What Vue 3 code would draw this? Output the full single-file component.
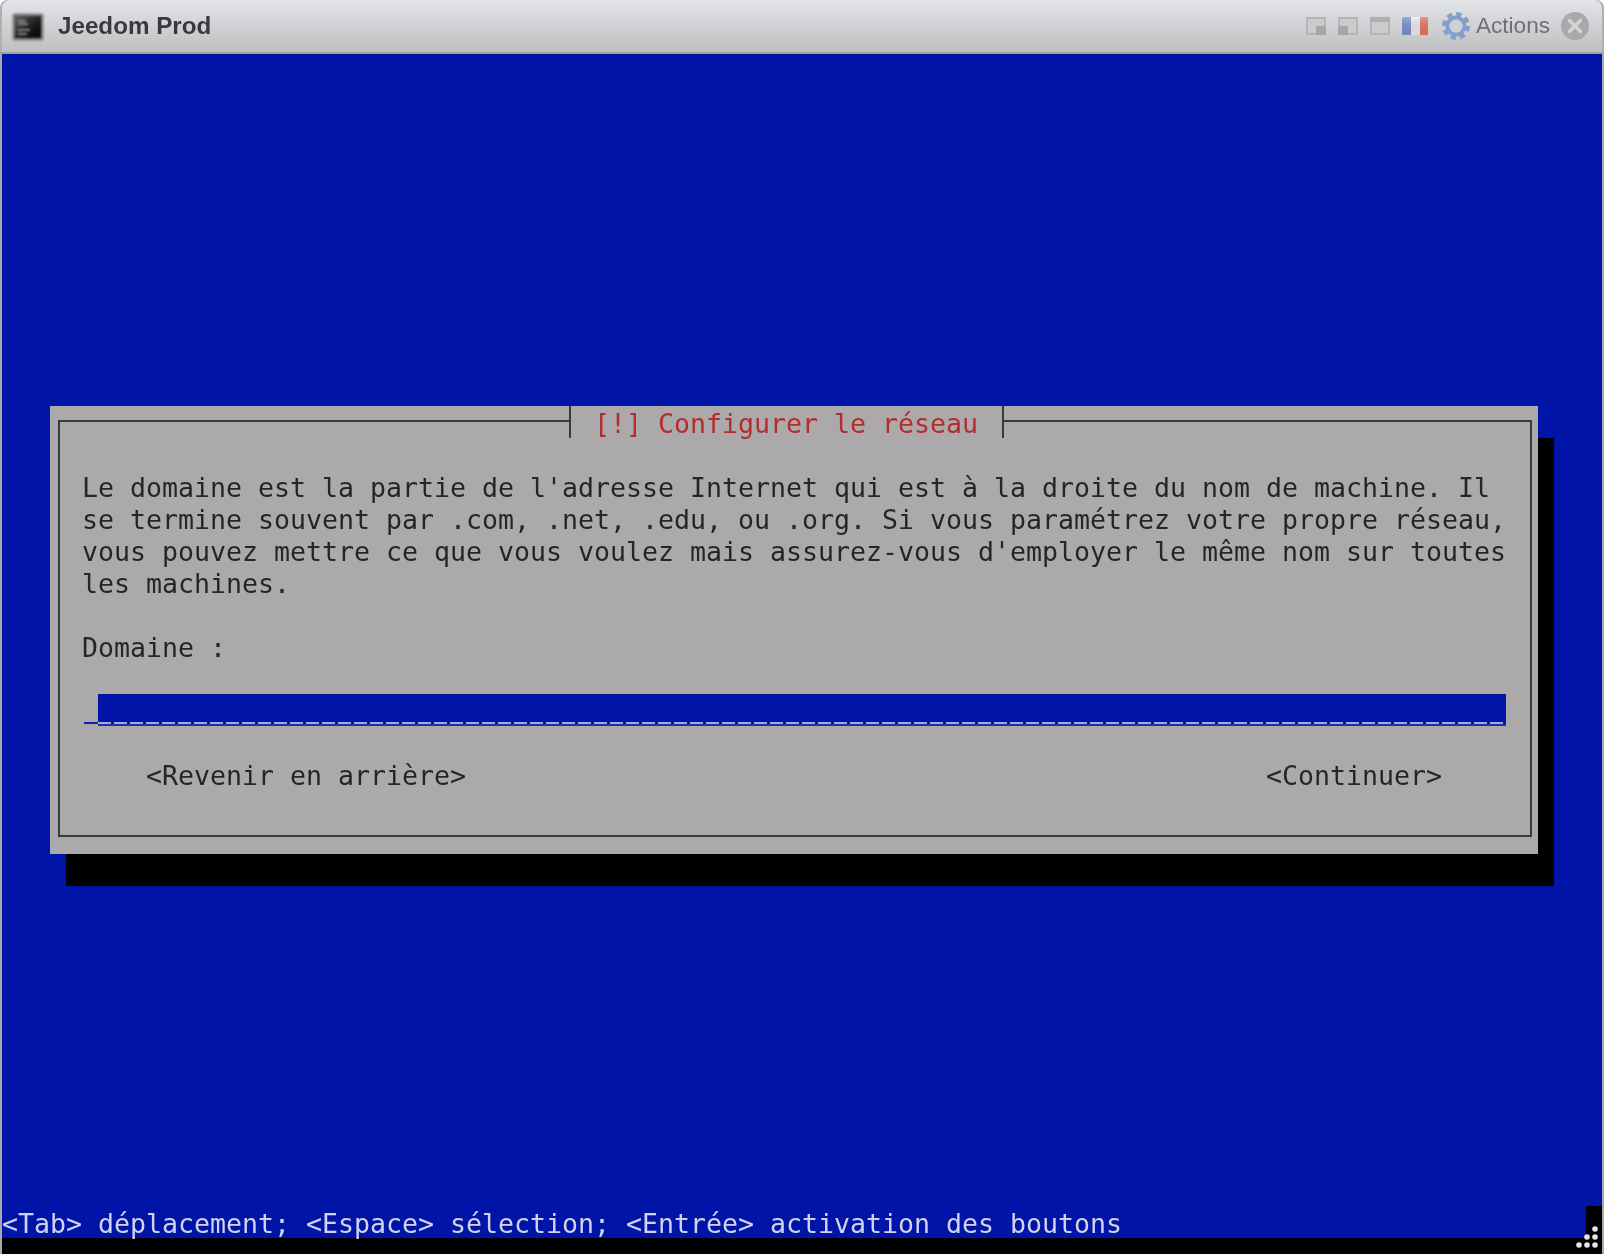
<script setup>
const bodyLines = [
  "Le domaine est la partie de l'adresse Internet qui est à la droite du nom de machine. Il",
  "se termine souvent par .com, .net, .edu, ou .org. Si vous paramétrez votre propre réseau,",
  "vous pouvez mettre ce que vous voulez mais assurez-vous d'employer le même nom sur toutes",
  "les machines."
]
const gripDots = [
  [16, 2], [8, 10], [16, 10], [0, 18], [8, 18], [16, 18]
]
</script>

<template>
  <div class="window">
    <header class="titlebar">
      <svg class="app-icon" width="32" height="28" viewBox="0 0 32 28">
        <defs>
          <linearGradient id="term" x1="0" y1="0" x2="1" y2="1">
            <stop offset="0" stop-color="#5f5f5f" />
            <stop offset="0.6" stop-color="#181818" />
            <stop offset="1" stop-color="#050505" />
          </linearGradient>
          <linearGradient id="flagshade" x1="0" y1="0" x2="0" y2="1">
            <stop offset="0" stop-color="#ffffff" stop-opacity="0.25" />
            <stop offset="1" stop-color="#000000" stop-opacity="0.05" />
          </linearGradient>
        </defs>
        <rect x="0.5" y="0.5" width="31" height="27" rx="2" fill="#7e7e7e" />
        <rect x="3" y="3" width="26" height="22" fill="url(#term)" />
        <path d="M6 8h8M6 11h10M6 17h12M6 21h9" stroke="#858585" stroke-width="2" />
      </svg>
      <span class="app-name">Jeedom Prod</span>
      <div class="tools">
        <svg class="tool" width="20" height="18" viewBox="0 0 20 18">
          <rect x="1" y="1" width="18" height="16" fill="#cbcbcd" stroke="#b6b6b8" stroke-width="2" />
          <rect x="10" y="9" width="10" height="9" fill="#a6a6a8" />
        </svg>
        <svg class="tool" width="20" height="18" viewBox="0 0 20 18">
          <rect x="1" y="1" width="18" height="16" fill="#cbcbcd" stroke="#b6b6b8" stroke-width="2" />
          <rect x="0" y="9" width="10" height="9" fill="#a6a6a8" />
        </svg>
        <svg class="tool" width="20" height="18" viewBox="0 0 20 18">
          <rect x="1" y="1" width="18" height="16" fill="#cbcbcd" stroke="#b6b6b8" stroke-width="2" />
          <rect x="0" y="0" width="20" height="5" fill="#b0b0b2" />
        </svg>
        <svg class="flag" width="26" height="18" viewBox="0 0 26 18">
          <rect width="9" height="18" fill="#7a90cc" />
          <rect x="9" width="9" height="18" fill="#e9e9ee" />
          <rect x="18" width="8" height="18" fill="#e4745f" />
          <rect width="26" height="18" fill="url(#flagshade)" />
        </svg>
        <svg class="gear" width="28" height="28" viewBox="0 0 28 28">
          <circle cx="14" cy="14" r="12" fill="none" stroke="#82a0ca" stroke-width="4" stroke-dasharray="5.4 4" />
          <circle cx="14" cy="14" r="8.5" fill="none" stroke="#82a0ca" stroke-width="4" />
          <circle cx="14" cy="14" r="6.5" fill="#cfd0d4" />
        </svg>
        <span class="actions">Actions</span>
        <svg class="close" width="28" height="28" viewBox="0 0 28 28">
          <circle cx="14" cy="14" r="14" fill="#a9a9ab" />
          <path d="M8.5 8.5l11 11M19.5 8.5l-11 11" stroke="#d4d4d6" stroke-width="3.4" stroke-linecap="round" />
        </svg>
      </div>
    </header>

    <main class="screen">
      <section class="dialog">
        <div class="frame">
          <div class="term-row" v-for="line in bodyLines" :key="line">{{ line }}</div>
          <div class="term-row label">Domaine :</div>
          <div class="input">
            <span class="cursor"></span>
            <span class="field"></span>
          </div>
          <div class="term-row buttons">
            <span>&lt;Revenir en arrière&gt;</span>
            <span>&lt;Continuer&gt;</span>
          </div>
        </div>
        <h1 class="title term-row">[!] Configurer le réseau</h1>
      </section>

      <footer class="status">
        <div class="term-row status-text">&lt;Tab&gt; déplacement; &lt;Espace&gt; sélection; &lt;Entrée&gt; activation des boutons</div>
        <div class="grip-cell"></div>
      </footer>
      <div class="bottom"></div>
      <svg class="grip" width="24" height="24" viewBox="0 0 24 24">
        <circle v-for="d in gripDots" :key="d.join()" :cx="d[0] + 3" :cy="d[1] + 3" r="2.8" fill="#e6e6e0" />
      </svg>
    </main>
  </div>
</template>

<style>
html, body {
  margin: 0;
  background: #ffffff;
  overflow: hidden;
}
</style>

<style scoped>
.window {
  width: 1604px;
  height: 1254px;
  display: flex;
  flex-direction: column;
  overflow: hidden;
}
.titlebar {
  height: 54px;
  box-sizing: border-box;
  flex: none;
  display: flex;
  align-items: center;
  padding: 0 15px 0 12px;
  border-radius: 8px 8px 0 0;
  border-bottom: 2px solid #a3a3a5;
  box-shadow: inset 2px 0 0 #b0b0b2, inset -2px 0 0 #b0b0b2;
  background: linear-gradient(#e3e4e8, #bfbfc1);
  font-family: "Liberation Sans", Arial, sans-serif;
}
.app-icon {
  flex: none;
  margin-top: 1px;
  filter: blur(0.8px);
}
.app-name {
  margin-left: 14px;
  font-size: 24.2px;
  font-weight: 700;
  color: #3a3a3c;
  filter: blur(0.4px);
}
.tools {
  margin-left: auto;
  display: flex;
  align-items: center;
  filter: blur(0.7px);
}
.tool {
  margin-left: 12px;
}
.flag {
  margin-left: 12px;
}
.gear {
  margin-left: 14px;
}
.actions {
  margin-left: 6px;
  font-size: 22.6px;
  color: #707073;
}
.close {
  margin-left: 11px;
}
.screen {
  position: relative;
  flex: 1;
  display: flex;
  flex-direction: column;
  margin: 0 2px;
  background: #0014a8;
  box-shadow: -2px 0 0 #a9a9ab, 2px 0 0 #a9a9ab;
}
.term-row {
  height: 32px;
  line-height: 35px;
  white-space: pre;
  font-family: "DejaVu Sans Mono", "Liberation Mono", monospace;
  font-size: 26.58px;
  font-weight: 400;
  filter: blur(0.45px);
}
.dialog {
  position: relative;
  box-sizing: border-box;
  width: 1488px;
  height: 448px;
  margin: 352px 0 0 48px;
  padding: 14px 6px 17px 8px;
  background: #aca9ab;
  box-shadow: 16px 32px 0 #000000;
  color: #262626;
}
.frame {
  box-sizing: border-box;
  height: 417px;
  padding: 48px 22px 0;
  border: 2px solid #3a3a3a;
}
.label {
  margin-top: 32px;
}
.input {
  display: flex;
  height: 32px;
  margin-top: 32px;
}
.cursor {
  width: 14px;
  flex: none;
  margin-left: 2px;
  margin-top: 28px;
  height: 2px;
  background: #0f23a8;
}
.field {
  width: 1408px;
  flex: none;
  background: linear-gradient(#0014a8, #0014a8) top / 100% 28px no-repeat,
    repeating-linear-gradient(90deg, #a8a6d2 0 13px, #0014a8 13px 16px);
  background-color: #0014a8;
  box-shadow: inset 0 -2px 0 #1f30ae;
}
.buttons {
  display: flex;
  margin-top: 32px;
  padding-left: 64px;
}
.buttons span:last-child {
  margin-left: 800px;
}
.title {
  position: absolute;
  left: 519px;
  top: 0;
  width: 435px;
  box-sizing: border-box;
  margin: 0;
  padding-left: 23px;
  border-left: 2px solid #3a3a3a;
  border-right: 2px solid #3a3a3a;
  background: #aca9ab;
  color: #b42c2e;
}
.status {
  margin-top: auto;
  display: flex;
  justify-content: space-between;
  height: 32px;
  flex: none;
}
.status-text {
  color: #d2d2ee;
}
.grip-cell {
  width: 16px;
  height: 32px;
  background: #000000;
}
.bottom {
  height: 16px;
  flex: none;
  background: #000000;
}
.grip {
  position: absolute;
  right: 2px;
  bottom: 6px;
  filter: blur(0.4px);
}
</style>
